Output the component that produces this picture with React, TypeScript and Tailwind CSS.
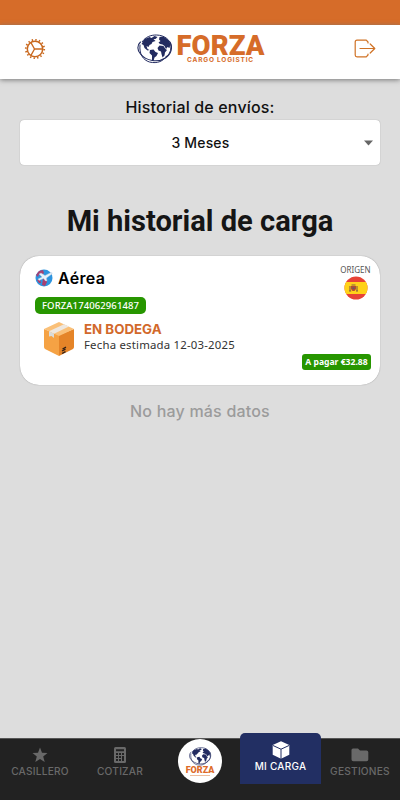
import type { ReactNode } from "react";

interface NavItemProps {
  label: string;
  icon: ReactNode;
}

const Globe = ({ className }: { className?: string }) => (
  <svg viewBox="0 0 36 30" className={className} fill="none">
    <path
      d="M5.5 8C9 3 14 .9 20 1C28 1.2 34.5 6 34.5 13C34.5 18 32 21 29.5 23"
      stroke="#222b60"
      strokeWidth="1"
    />
    <path
      d="M4 8C.5 11 .5 16 4 20C10 27 21 29 29 24C35 20 36.5 13 33.5 8"
      stroke="#222b60"
      strokeWidth="1.1"
      strokeLinecap="round"
    />
    <path
      d="M3.5 11C2.5 20 6.5 26 13 28C21 30 27 27 30 22"
      stroke="#222b60"
      strokeWidth="1"
      strokeLinecap="round"
    />
    <path
      d="M5 10L8 5L13 3L15 4L18 2L21 3L19 5L17 5L19 7L16 8L15 10L13 11L12 13L10 12L11 15L13 16L11 16.5L8 14L7 11ZM13.5 16L17 15.5L19 18L21.5 19L20 22L18 23.5L17 27L15.5 26L15.5 21.5L13 19Z"
      fill="#222b60"
    />
    <path
      d="M23 3L27 2.5L32 6L34 10L33 14L31 13L29.5 15L28 12L26 10.5L23.5 10L22 8.5L24 7L22.5 5.5ZM23 11.5L27 12L29 15L30.5 16L28.5 18.5L28 21.5L26 23.5L25 20L24.5 17.5L22 16.5L21 14Z"
      fill="#222b60"
    />
  </svg>
);

const SettingsIcon = () => (
  <svg viewBox="0 0 22 22" className="size-[22px]" fill="none" stroke="#c9691f">
    <circle cx="11" cy="11" r="7.7" strokeWidth="1.5" />
    <circle cx="11" cy="11" r="9.2" strokeWidth="1.8" strokeDasharray="1.4 2.213" />
    <path d="M10.5 11H18.6M10.5 11L6.9 4.5M10.5 11L6.9 17.5" strokeWidth="1.4" />
  </svg>
);

const LogoutIcon = () => (
  <svg
    viewBox="0 0 22 20"
    className="h-5 w-[22px]"
    fill="none"
    stroke="#d07225"
    strokeWidth="1.2"
    strokeLinecap="round"
    strokeLinejoin="round"
  >
    <path d="M14 4V3L12.3 1.2H3Q1.2 1.2 1.2 3V16Q1.2 17.8 3 17.8H12.3L14 16V15" />
    <path d="M6 9.5H20.6M16.2 5L20.8 9.5L16.2 14" />
  </svg>
);

const AirIcon = () => (
  <svg viewBox="0 0 18 18" className="size-[18px]">
    <circle cx="9" cy="9" r="8.5" fill="#2d94df" />
    <path d="M1 6L4 2L8 1L9 4L7 6L4 5L3 8ZM8 10L12 10L12 13L10 17L7 16ZM2 11L5 10L6 14L4 14Z" fill="#a93f70" />
    <path
      d="M3 10L7 8L4 5L6 4L10 6.5L15 4Q18 3 17 5L11.5 9L12 12L10.5 12L8.5 9.5L4 11.5Z"
      fill="#e8f2fb"
      stroke="#a7bdd5"
      strokeWidth=".4"
    />
  </svg>
);

const PackageIcon = () => (
  <svg viewBox="0 0 32 36" className="h-9 w-8">
    <path d="M1 8L16 14V35L2 28Q1 27 1 26Z" fill="#f5a244" />
    <path d="M16 14L31 8V26Q31 27 30 28L16 35Z" fill="#e58428" />
    <path d="M1 8L16 1L31 8L16 15Z" fill="#fac078" />
    <path d="M6 10.3L21 3.3L26 5.6L11 12.8Z" fill="#eee7df" />
    <path d="M6 10.3L11 12.7V17L8.5 15L6 15.5Z" fill="#d9dcdb" />
    <path d="M19 30L22.5 28.2M19 32.5L22.5 30.7M19.5 28L23 26.2" stroke="#302018" strokeWidth="1.3" fill="none" />
  </svg>
);

const SpainFlag = () => (
  <svg viewBox="0 0 24 24" className="size-6">
    <clipPath id="flag">
      <circle cx="12" cy="12" r="11.5" />
    </clipPath>
    <g clipPath="url(#flag)">
      <path fill="#e74236" d="M0 0H24V24H0Z" />
      <path fill="#ffd219" d="M0 6H24V18H0Z" />
      <path d="M7 10H12V13L10.5 15H8.5L7 13Z" fill="#b34e32" />
      <path d="M6 10V15M13 10V15M7.5 9H11.5M5 15H7.2M12 15H14" stroke="#865d42" strokeWidth="1.1" />
      <path d="M8.5 11.5H10.5V13H8.5Z" fill="#596070" />
    </g>
  </svg>
);

const StarIcon = () => (
  <svg viewBox="0 0 16 16" className="size-4" fill="#696969">
    <path d="M8 .5L10 5.7L15.5 6L11.2 9.5L12.7 15L8 11.9L3.3 15L4.8 9.5L.5 6L6 5.7Z" />
  </svg>
);

const CalculatorIcon = () => (
  <svg viewBox="0 0 14 18" className="h-[18px] w-3.5">
    <rect x="1" y="1" width="12" height="16" rx="1.5" fill="#696969" />
    <path
      d="M3 3.2H11V5.2H3ZM3 7H5V9H3ZM6 7H8V9H6ZM9 7H11V9H9ZM3 10H5V12H3ZM6 10H8V12H6ZM3 13H5V15H3ZM6 13H8V15H6ZM9 10H11V15H9Z"
      fill="#222222"
    />
  </svg>
);

const CubeIcon = () => (
  <svg viewBox="0 0 18 18" className="size-[18px]">
    <path d="M9 .3L17.3 4V13.7L9 17.8L.7 13.7V4Z" fill="white" />
    <path d="M1 4.5L9 8.2L17 4.5M9 8.2V18" stroke="#222f63" strokeWidth="1" fill="none" />
  </svg>
);

const FolderIcon = () => (
  <svg viewBox="0 0 18 14" className="h-3.5 w-[18px]" fill="#696969">
    <path d="M2 .5H7L9 2.5H15.5Q17.3 2.5 17.3 4.2V11.5Q17.3 13.2 15.5 13.2H2.3Q.5 13.2 .5 11.5V2Q.5 .5 2 .5Z" />
  </svg>
);

const NavItem = ({ label, icon }: NavItemProps) => (
  <button className="flex w-20 shrink-0 flex-col items-center pt-[7px]">
    <span className="flex h-[18px] items-center">{icon}</span>
    <span className="mt-px font-['Inter',sans-serif] text-[10.2px] leading-3 font-medium tracking-[0.2px] whitespace-nowrap text-[#696969]">
      {label}
    </span>
  </button>
);

const ShipmentCard = () => (
  <article className="mx-5 mt-[15px] flex h-[129px] justify-between rounded-[19px] bg-white py-3 pr-[9px] pl-[15px] shadow-[0_0_1px_#777]">
    <div>
      <div className="flex h-5 items-center gap-[5px]">
        <AirIcon />
        <h2 className="font-['Inter',sans-serif] text-base leading-5 font-semibold tracking-[0.3px] text-black">
          Aérea
        </h2>
      </div>
      <div className="mt-[9px] flex h-[17px] w-[111px] items-center justify-center rounded-[5px] bg-[#279600]">
        <span className="font-['Noto_Sans',sans-serif] text-[9.5px] leading-none font-medium tracking-[0.1px] text-white">
          FORZA174062961487
        </span>
      </div>
      <div className="mt-[7px] flex gap-[9px] pl-2">
        <PackageIcon />
        <div>
          <p className="font-['Inter',sans-serif] text-[13.3px] leading-4 font-bold text-[#d2692b]">
            EN BODEGA
          </p>
          <p className="font-['Noto_Sans',sans-serif] text-[11.4px] leading-[15px] tracking-[0.2px] whitespace-nowrap text-[#333]">
            Fecha estimada 12-03-2025
          </p>
        </div>
      </div>
    </div>
    <div className="flex flex-col items-end">
      <div className="flex w-[31px] flex-col items-center">
        <span className="-mt-[5px] font-['Noto_Sans',sans-serif] text-[8px] leading-[13px] text-[#555]">
          ORIGEN
        </span>
        <SpainFlag />
      </div>
      <div className="mt-[54px] flex h-4 w-[69px] items-center justify-center rounded-[3px] bg-[#279600]">
        <span className="font-['Noto_Sans',sans-serif] text-[8.6px] leading-none font-bold whitespace-nowrap text-white">
          A pagar €32.88
        </span>
      </div>
    </div>
  </article>
);

const App = () => {
  return (
    <div className="flex h-[800px] w-[400px] flex-col overflow-hidden bg-[#dddddd]">
      <div className="h-[25px] shrink-0 bg-[#d66c29]" />
      <header className="flex h-[54px] shrink-0 items-center justify-between bg-white pr-6 pb-1.5 pl-6 shadow-[0_1px_5px_#777]">
        <SettingsIcon />
        <div className="flex items-center gap-1">
          <Globe className="h-[30px] w-[37px]" />
          <div className="flex w-[87px] flex-col items-center">
            <span className="font-['Roboto',sans-serif] text-[27.5px] leading-[23px] font-black tracking-[0.1px] text-[#d66c29]">
              FORZA
            </span>
            <span className="font-['Inter',sans-serif] text-[6.5px] leading-[7px] font-bold tracking-[0.8px] whitespace-nowrap text-[#d66c29]">
              CARGO LOGISTIC
            </span>
          </div>
        </div>
        <LogoutIcon />
      </header>

      <main className="flex-1 pt-[18px]">
        <p className="text-center font-['Inter',sans-serif] text-[16px] leading-5 font-medium tracking-[0.15px] text-[#111]">
          Historial de envíos:
        </p>
        <button className="mx-5 mt-[3px] flex h-[45px] w-[360px] items-center rounded bg-white pr-[7px] pl-[17px] shadow-[0_0_1px_#888]">
          <span className="flex-1 text-center font-['Inter',sans-serif] text-sm font-medium tracking-[0.15px] text-[#111]">
            3 Meses
          </span>
          <svg viewBox="0 0 9 6" className="h-1.5 w-[9px]" fill="#666">
            <path d="M0 .5H9L4.5 5.5Z" />
          </svg>
        </button>
        <h1 className="mt-9 text-center font-['Roboto',sans-serif] text-[29.1px] leading-10 font-bold whitespace-nowrap text-[#151515]">
          Mi historial de carga
        </h1>
        <ShipmentCard />
        <p className="mt-4 text-center font-['Inter',sans-serif] text-[16px] leading-5 font-medium tracking-[0.2px] text-[#9b9b9b]">
          No hay más datos
        </p>
      </main>

      <nav className="flex h-[62px] shrink-0 items-start border-t border-[#555] bg-[#222222]">
        <NavItem label="CASILLERO" icon={<StarIcon />} />
        <NavItem label="COTIZAR" icon={<CalculatorIcon />} />
        <div className="flex w-20 shrink-0 justify-center">
          <button className="flex size-11 flex-col items-center rounded-full bg-white pt-2">
            <Globe className="h-[19px] w-[26px]" />
            <span className="font-['Roboto',sans-serif] text-[9px] leading-[9px] font-black text-[#dd6b2a]">
              FORZA
            </span>
            <span className="h-px w-5 bg-[#edbd9d]" />
          </button>
        </div>
        <button className="-mt-1.5 -mr-px flex h-[51px] w-[81px] shrink-0 flex-col items-center rounded-t-[5px] bg-[#222f63] pt-2">
          <CubeIcon />
          <span className="font-['Inter',sans-serif] text-[10px] leading-[14px] font-medium tracking-[0.25px] text-white">
            MI CARGA
          </span>
        </button>
        <NavItem label="GESTIONES" icon={<FolderIcon />} />
      </nav>
    </div>
  );
};

export default App;
